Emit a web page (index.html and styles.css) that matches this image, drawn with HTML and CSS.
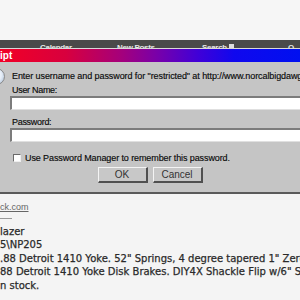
FILE: index.html
```html
<!DOCTYPE html>
<html>
<head>
<meta charset="utf-8">
<link rel="stylesheet" href="styles.css">
</head>
<body>
<div class="page">
  <div class="top"></div>
  <div class="nav">
    <span class="nav-item cal">Calendar</span>
    <span class="nav-item posts">New Posts</span>
    <span class="nav-item search">Search <i class="arr"></i></span>
    <span class="nav-item q">Q</span>
  </div>
  <div class="dialog">
    <div class="title">ipt</div>
    <div class="body">
      <div class="msg"><span class="icon"></span><span class="msg-text">Enter username and password for "restricted" at http://www.norcalbigdawgs.com</span></div>
      <div class="label">User Name:</div>
      <div class="input"></div>
      <div class="label label-pw">Password:</div>
      <div class="input"></div>
      <div class="check"><span class="box"></span><span>Use Password Manager to remember this password.</span></div>
      <div class="buttons"><span class="btn">OK</span><span class="btn">Cancel</span></div>
    </div>
  </div>
  <div class="content">
    <div class="line link">ck.com</div>
    <div class="rule"></div>
    <div class="line">lazer</div>
    <div class="line">5\NP205</div>
    <div class="line">.88 Detroit 1410 Yoke. 52" Springs, 4 degree tapered 1" Zero rate</div>
    <div class="line">88 Detroit 1410 Yoke Disk Brakes. DIY4X Shackle Flip w/6" Shackles</div>
    <div class="line">n stock.</div>
  </div>
</div>
</body>
</html>
```
FILE: styles.css
```css
html, body {
  margin: 0;
  padding: 0;
}
body {
  background: #f4f4f4;
  font-family: "Liberation Sans", Arial, sans-serif;
}
.page {
  width: 300px;
  height: 300px;
  overflow: hidden;
  background: #f4f4f4;
}
.top {
  height: 40px;
  background: #f6f6f6;
}
.nav {
  box-sizing: content-box;
  height: 5px;
  padding-top: 3px;
  background: #4a4a4a;
  border-bottom: 1px solid #d8d8d8;
  overflow: hidden;
  display: flex;
  color: #e8e8e8;
  font-size: 8px;
  font-weight: bold;
  line-height: 9px;
  letter-spacing: -0.3px;
  white-space: nowrap;
}
.nav-item {
  display: inline-block;
  flex: none;
}
.cal { margin-left: 40px; width: 77px; }
.posts { width: 85px; }
.search { width: 86px; }
.q { width: 20px; }
.arr {
  display: inline-block;
  width: 5px;
  height: 5px;
  background: #ddd;
  vertical-align: top;
  margin-top: 1px;
}
.dialog {
  width: 300px;
}
.title {
  height: 13px;
  background: linear-gradient(to right, #f20026 0%, #d8003e 22%, #a6007a 40%, #7a00a8 52%, #4000d8 66%, #1008ee 78%, #0010f0 100%);
  color: #fff;
  font-size: 10px;
  font-weight: bold;
  line-height: 13px;
}
.body {
  background: #c5c5c5;
  padding: 8px 0 9px 10px;
  border-bottom: 2px solid #5a5a5a;
  color: #0a0a0a;
  font-size: 9px;
  -webkit-text-stroke: 0.15px #0a0a0a;
}
.msg {
  display: flex;
  align-items: center;
  height: 12px;
  line-height: 12px;
  white-space: nowrap;
}
.icon {
  flex: none;
  width: 15px;
  height: 15px;
  border-radius: 50%;
  background: radial-gradient(circle at 40% 40%, #ffffff 0%, #e6eef8 50%, #9fb3cc 100%);
  border: 1px solid #8a8a8a;
  margin-left: -22px;
  margin-right: 7px;
}
.msg-text {
  letter-spacing: -0.08px;
}
.label {
  margin-top: 2px;
  height: 12px;
  line-height: 12px;
  padding-left: 2px;
  letter-spacing: -0.3px;
}
.label-pw {
  margin-top: 6px;
}
.input {
  height: 11px;
  margin-right: -20px;
  background: #fff;
  border-top: 2px solid #7c7c7c;
  border-left: 2px solid #7c7c7c;
  border-bottom: 1px solid #e0e0e0;
}
.check {
  margin-top: 10px;
  height: 12px;
  line-height: 12px;
  display: flex;
  align-items: center;
  padding-left: 3px;
  white-space: nowrap;
  letter-spacing: -0.1px;
}
.box {
  width: 6px;
  height: 6px;
  background: #fff;
  border-top: 1px solid #6a6a6a;
  border-left: 1px solid #6a6a6a;
  border-right: 1px solid #eee;
  border-bottom: 1px solid #eee;
  margin-right: 4px;
}
.buttons {
  margin-top: 3px;
  margin-left: -10px;
  display: flex;
  justify-content: center;
  gap: 5px;
}
.btn {
  box-sizing: border-box;
  width: 50px;
  height: 16px;
  background: #c8c8c8;
  border-top: 1px solid #f4f4f4;
  border-left: 1px solid #f4f4f4;
  border-right: 2px solid #505050;
  border-bottom: 2px solid #505050;
  text-align: center;
  line-height: 13px;
  font-size: 10px;
  color: #333;
  -webkit-text-stroke: 0;
}
.content {
  padding-top: 7px;
  font-family: "DejaVu Sans", sans-serif;
  font-size: 10px;
  color: #2a2a2a;
  -webkit-text-stroke: 0.25px #2a2a2a;
  white-space: nowrap;
}
.line {
  height: 13.5px;
  line-height: 13.5px;
}
.link {
  font-family: "Liberation Sans", Arial, sans-serif;
  font-size: 9px;
  color: #666;
  -webkit-text-stroke: 0;
  text-decoration: underline;
}
.rule {
  width: 12px;
  height: 1px;
  background: #999;
  margin: 3px 0 6px;
}
```
